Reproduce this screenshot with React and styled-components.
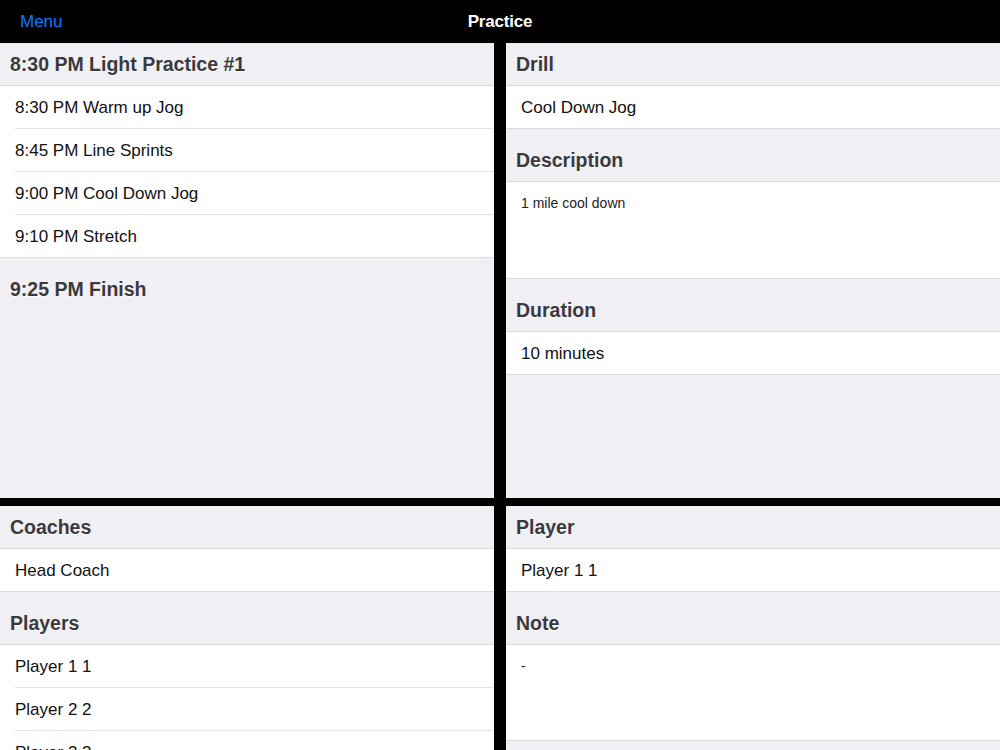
import React from 'react';
import styled, { createGlobalStyle } from 'styled-components';

const color_bg = '#efeff4';
const color_line = '#d9d9de';
const color_head = '#3a3a3d';

const GlobalStyle = createGlobalStyle`
	html, body {
		margin: 0;
		padding: 0;
		background: #000;
		font-family: "Liberation Sans", Arial, sans-serif;
	}
`;

const App = () => {
	return (
		<Screen>
			<GlobalStyle />
			<NavBar>
				<NavButton>Menu</NavButton>
				<NavTitle>Practice</NavTitle>
				<span />
			</NavBar>
			<Split>
				<Panel>
					<Header>8:30 PM Light Practice #1</Header>
					<Group>
						<Row>8:30 PM Warm up Jog</Row>
						<Row>8:45 PM Line Sprints</Row>
						<Row>9:00 PM Cool Down Jog</Row>
						<Row>9:10 PM Stretch</Row>
					</Group>
					<Header spaced bare>9:25 PM Finish</Header>
				</Panel>
				<Panel>
					<Header>Drill</Header>
					<Group>
						<Row>Cool Down Jog</Row>
					</Group>
					<Header spaced>Description</Header>
					<TextBox height={97}>1 mile cool down</TextBox>
					<Header spaced>Duration</Header>
					<Group>
						<Row>10 minutes</Row>
					</Group>
				</Panel>
				<Panel>
					<Header>Coaches</Header>
					<Group>
						<Row>Head Coach</Row>
					</Group>
					<Header spaced>Players</Header>
					<Group>
						<Row>Player 1 1</Row>
						<Row>Player 2 2</Row>
						<Row>Player 3 3</Row>
					</Group>
				</Panel>
				<Panel>
					<Header>Player</Header>
					<Group>
						<Row>Player 1 1</Row>
					</Group>
					<Header spaced>Note</Header>
					<TextBox height={96}>-</TextBox>
				</Panel>
			</Split>
		</Screen>
	);
};

export default App;

const Screen = styled.div`
	width: 1000px;
	height: 750px;
	overflow: hidden;
	background: #000;
	display: flex;
	flex-direction: column;
`;

const NavBar = styled.div`
	height: 43px;
	flex-shrink: 0;
	display: grid;
	grid-template-columns: 1fr auto 1fr;
	align-items: center;
	padding: 0 20px;
	box-sizing: border-box;
`;

const NavButton = styled.span`
	color: #0a7aff;
	font-size: 17px;
	justify-self: start;
`;

const NavTitle = styled.span`
	color: #fff;
	font-size: 17px;
	font-weight: 700;
	letter-spacing: -0.2px;
`;

const Split = styled.div`
	flex: 1;
	display: grid;
	grid-template-columns: 494px 494px;
	grid-template-rows: 455px 244px;
	column-gap: 12px;
	row-gap: 8px;
	overflow: hidden;
`;

const Panel = styled.div`
	background: ${color_bg};
	overflow: hidden;
	display: flex;
	flex-direction: column;
`;

const Header = styled.div`
	flex-shrink: 0;
	box-sizing: border-box;
	height: ${(p) => (p.spaced ? 53 : 43)}px;
	padding: ${(p) => (p.spaced ? 11 : 1)}px 10px 0;
	display: flex;
	align-items: center;
	font-size: 19.5px;
	font-weight: 700;
	color: ${color_head};
	text-shadow: 0 1px 0 rgba(255, 255, 255, 0.9);
	border-bottom: 1px solid ${(p) => (p.bare ? 'transparent' : color_line)};
`;

const Group = styled.div`
	flex-shrink: 0;
	background: #fff;
	padding-left: 15px;
	border-bottom: 1px solid ${color_line};
`;

const Row = styled.div`
	height: 41px;
	padding-top: 1px;
	display: flex;
	align-items: center;
	font-size: 17px;
	color: #111;
	border-bottom: 1px solid #e4e4e8;

	&:last-child {
		border-bottom: none;
	}
`;

const TextBox = styled.div`
	flex-shrink: 0;
	height: ${(p) => p.height}px;
	background: #fff;
	padding: 13px 15px 0;
	box-sizing: border-box;
	font-size: 14px;
	color: #222;
	border-bottom: 1px solid ${color_line};
`;
